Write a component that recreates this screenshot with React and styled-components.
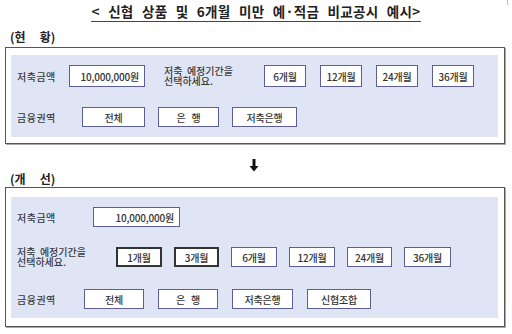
import React from "react";
import styled, { createGlobalStyle } from "styled-components";

const GlobalStyle = createGlobalStyle`
  html, body {
    margin: 0;
    padding: 0;
    background: #ffffff;
  }
  body {
    font-family: "Noto Sans CJK KR", "Noto Sans", sans-serif;
    color: #333333;
  }
`;

const Page = styled.div`
  width: 512px;
  height: 334px;
  overflow: hidden;
  position: relative;
`;

const Title = styled.h1`
  margin: 3px 0 0;
  font-size: 13.5px;
  line-height: 16px;
  font-weight: 700;
  text-align: center;
  color: #222;
  white-space: pre;
  letter-spacing: 0.3px;
  word-spacing: 5px;
  span {
    border-bottom: 1.5px solid #444;
    padding: 0 1px;
  }
`;

const Heading = styled.h2`
  margin: ${(p) => p.$top}px 0 0 10px;
  font-size: 12px;
  line-height: 14px;
  font-weight: 700;
  color: #222;
  white-space: pre;
  word-spacing: 2px;
`;

const Frame = styled.div`
  margin: ${(p) => p.$top}px 0 0 5px;
  width: 500px;
  border: 1px solid #555;
  box-shadow: 1px 1px 0 #aaa;
  padding: ${(p) => p.$pad};
  box-sizing: border-box;
`;

const Panel = styled.div`
  background: #dfe5f5;
  display: flex;
  flex-direction: column;
  padding: 10px 0 ${(p) => p.$bottom}px 6px;
`;

const Row = styled.div`
  display: flex;
  align-items: center;
  height: ${(p) => p.$h}px;
  margin-top: ${(p) => p.$mt || 0}px;
`;

const Label = styled.div`
  width: ${(p) => p.$w}px;
  flex: none;
  font-size: 10px;
  font-weight: 500;
  color: #3a3a3a;
  letter-spacing: 0.5px;
`;

const Guide = styled.div`
  width: ${(p) => p.$w}px;
  margin-left: ${(p) => p.$ml || 0}px;
  flex: none;
  font-size: 10px;
  line-height: 10px;
  font-weight: 500;
  color: #3a3a3a;
  white-space: pre;
`;

const Amount = styled.div`
  width: ${(p) => p.$w}px;
  height: 100%;
  box-sizing: border-box;
  flex: none;
  border: 1.5px solid #5d5d98;
  background: #fff;
  display: flex;
  align-items: center;
  justify-content: flex-end;
  padding-right: 5px;
  font-size: 10px;
  font-weight: 500;
  color: #333;
  letter-spacing: -0.2px;
`;

const Options = styled.div`
  display: flex;
  gap: ${(p) => p.$gap}px;
  height: 100%;
`;

const Option = styled.div`
  width: ${(p) => p.$w}px;
  height: 100%;
  box-sizing: border-box;
  border: ${(p) => (p.$dark ? "2px solid #333" : "1.5px solid #5d5d98")};
  background: #fff;
  display: flex;
  align-items: center;
  justify-content: center;
  font-size: 10px;
  font-weight: 500;
  color: #333;
  white-space: pre;
  letter-spacing: -0.2px;
`;

const ArrowWrap = styled.div`
  display: flex;
  justify-content: center;
  margin-top: 15px;
  height: 13px;
  padding-right: 4px;
`;

const Arrow = () => (
  <svg width="10" height="13" viewBox="0 0 10 13">
    <path d="M3.5 0 H6.5 V7 H9.5 L5 12.5 L0.5 7 H3.5 Z" fill="#111" />
  </svg>
);

const Corner = styled.div`
  position: absolute;
  right: 4px;
  top: 0;
  width: 1px;
  height: 5px;
  background: #bbb;
`;

export default function App() {
  return (
    <Page>
      <GlobalStyle />
      <Corner />
      <Title>
        <span>{"< 신협 상품 및 6개월 미만 예·적금 비교공시 예시>"}</span>
      </Title>
      <Heading $top={11}>{"(현   황)"}</Heading>
      <Frame $top={3} $pad="7px 6px 6px 5px">
        <Panel $bottom={10}>
          <Row $h={22}>
            <Label $w={52}>저축금액</Label>
            <Amount $w={76}>10,000,000원</Amount>
            <Guide $w={100} $ml={19}>{"저축  예정기간을\n선택하세요."}</Guide>
            <Options $gap={14}>
              <Option $w={42}>6개월</Option>
              <Option $w={42}>12개월</Option>
              <Option $w={42}>24개월</Option>
              <Option $w={42}>36개월</Option>
            </Options>
          </Row>
          <Row $h={20} $mt={20}>
            <Label $w={65}>금융권역</Label>
            <Options $gap={13}>
              <Option $w={63}>전체</Option>
              <Option $w={61}>{"은   행"}</Option>
              <Option $w={65}>저축은행</Option>
            </Options>
          </Row>
        </Panel>
      </Frame>
      <ArrowWrap>
        <Arrow />
      </ArrowWrap>
      <Heading $top={0}>{"(개   선)"}</Heading>
      <Frame $top={1} $pad="9px 6px 8px 5px">
        <Panel $bottom={9}>
          <Row $h={20}>
            <Label $w={76}>저축금액</Label>
            <Amount $w={87}>10,000,000원</Amount>
          </Row>
          <Row $h={20} $mt={20}>
            <Guide $w={99}>{"저축  예정기간을\n선택하세요."}</Guide>
            <Options $gap={12}>
              <Option $w={46} $dark>1개월</Option>
              <Option $w={45} $dark>3개월</Option>
              <Option $w={46}>6개월</Option>
              <Option $w={46}>12개월</Option>
              <Option $w={45}>24개월</Option>
              <Option $w={47}>36개월</Option>
            </Options>
          </Row>
          <Row $h={20} $mt={22}>
            <Label $w={67}>금융권역</Label>
            <Options $gap={14}>
              <Option $w={60}>전체</Option>
              <Option $w={60}>{"은   행"}</Option>
              <Option $w={61}>저축은행</Option>
              <Option $w={64}>신협조합</Option>
            </Options>
          </Row>
        </Panel>
      </Frame>
    </Page>
  );
}
